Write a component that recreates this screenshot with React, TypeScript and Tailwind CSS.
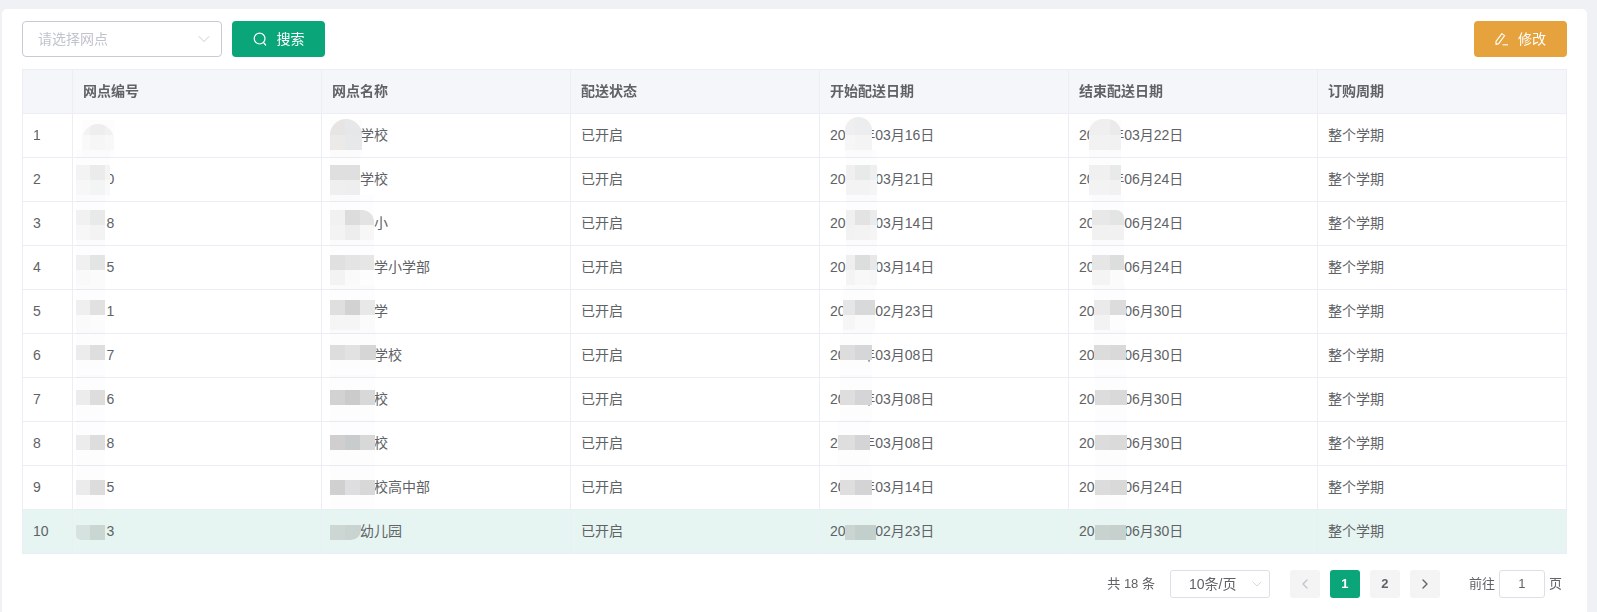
import { ChevronDown, ChevronLeft, ChevronRight } from 'lucide-react';

// w holds the width of each tile column, the mosaic grid is cut off at both ends
type Patch = { x: number; w: number[]; tiles: string[][]; lift?: number; shape?: string };

type Row = {
  id: string;
  name: [number, string];
  start: string;
  end: string;
  patches: [Patch, Patch, Patch, Patch];
};

const head = ['', '网点编号', '网点名称', '配送状态', '开始配送日期', '结束配送日期', '订购周期'];

// x of each patch is measured from the left edge of its cell
const rows: Row[] = [
  {
    id: '',
    name: [28, '学校'],
    start: '年03月16日',
    end: '年03月22日',
    patches: [
      { x: 9, w: [8, 15, 9], lift: -4, shape: 'rounded-t-[16px]', tiles: [['bg-[#f3f3f3]', 'bg-[#eeeeee]', 'bg-[#f1f1f1]'], ['bg-[#f9f9f9]', 'bg-[#f6f6f6]', 'bg-[#f8f8f8]']] },
      { x: 8, w: [15, 17], lift: 1, shape: 'rounded-t-[16px]', tiles: [['bg-[#e6e5e3]', 'bg-[#e6e7e9]'], ['bg-[#eceae8]', 'bg-[#e7e8ea]']] },
      { x: 25, w: [10, 17], lift: 3, shape: 'rounded-t-[14px]', tiles: [['bg-[#efefef]', 'bg-[#ebedee]'], ['bg-[#f6f6f6]', 'bg-[#f4f4f4]']] },
      { x: 20, w: [21, 11], lift: 1, shape: 'rounded-t-[14px]', tiles: [['bg-[#efefef]', 'bg-[#eaeaea]'], ['bg-[#f2f2f2]', 'bg-[#f1f1f1]']] },
    ],
  },
  {
    id: '0',
    name: [28, '学校'],
    start: '03月21日',
    end: '年06月24日',
    patches: [
      { x: 3, w: [14, 15, 5], tiles: [['bg-[#f3f3f3]', 'bg-[#ebebeb]', 'bg-[#f4f4f4]'], ['bg-[#f7f7f7]', 'bg-[#f3f4f4]', 'bg-[#f9f9f9]']] },
      { x: 8, w: [15, 15], tiles: [['bg-[#dfdfdf]', 'bg-[#dfdfdf]'], ['bg-[#efefef]', 'bg-[#eeeeee]']] },
      { x: 26, w: [9, 15, 7], tiles: [['bg-[#f0f0f0]', 'bg-[#e8eaea]', 'bg-[#efefef]'], ['bg-[#f3f3f3]', 'bg-[#f3f3f3]', 'bg-[#f5f5f5]']] },
      { x: 20, w: [21, 11], tiles: [['bg-[#f0f0f0]', 'bg-[#e8e9e9]'], ['bg-[#f3f3f3]', 'bg-[#f1f1f1]']] },
    ],
  },
  {
    id: '8',
    name: [42, '小'],
    start: '03月14日',
    end: '06月24日',
    patches: [
      { x: 3, w: [14, 15], tiles: [['bg-[#f1f1f1]', 'bg-[#e8e9e9]'], ['bg-[#f7f7f7]', 'bg-[#f3f3f3]']] },
      { x: 8, w: [15, 15, 14], shape: 'rounded-tr-[12px]', tiles: [['bg-[#f1f1f1]', 'bg-[#dcdcdc]', 'bg-[#e3e3e3]'], ['bg-[#f3f3f3]', 'bg-[#ededed]', 'bg-[#f7f7f7]']] },
      { x: 26, w: [9, 15, 7], tiles: [['bg-[#f0f0f0]', 'bg-[#e3e3e3]', 'bg-[#ebebeb]'], ['bg-[#f2f2f2]', 'bg-[#f3f3f3]', 'bg-[#f5f5f5]']] },
      { x: 23, w: [18, 14], shape: 'rounded-tr-[8px]', tiles: [['bg-[#e8e8e8]', 'bg-[#e3e4e4]'], ['bg-[#f1f1f1]', 'bg-[#f1f1f1]']] },
    ],
  },
  {
    id: '5',
    name: [42, '学小学部'],
    start: '03月14日',
    end: '06月24日',
    patches: [
      { x: 3, w: [14, 15], tiles: [['bg-[#f0f0f0]', 'bg-[#e3e4e4]'], ['bg-[#f9f9f9]', 'bg-[#fbfbfb]']] },
      { x: 8, w: [15, 15, 14], tiles: [['bg-[#e0e0e0]', 'bg-[#e4e4e4]', 'bg-[#e6e6e6]'], ['bg-[#f3f3f3]', 'bg-[#fafafa]', 'bg-[#fdfdfd]']] },
      { x: 26, w: [9, 15, 7], tiles: [['bg-[#efefef]', 'bg-[#dcdedd]', 'bg-[#e8e8e8]'], ['bg-[#f4f4f4]', 'bg-[#f8f8f8]', 'bg-[#f6f6f6]']] },
      { x: 23, w: [18, 14], tiles: [['bg-[#e6e6e6]', 'bg-[#dcdddd]'], ['bg-[#f4f4f4]', 'bg-[#fbfbfb]']] },
    ],
  },
  {
    id: '1',
    name: [42, '学'],
    start: '年02月23日',
    end: '06月30日',
    patches: [
      { x: 3, w: [14, 15], tiles: [['bg-[#efefef]', 'bg-[#e1e1e1]'], ['bg-[#fafafa]', 'bg-[#fcfcfc]']] },
      { x: 8, w: [15, 15, 15], tiles: [['bg-[#dfdfdf]', 'bg-[#d2d2d2]', 'bg-[#e8e8e8]'], ['bg-[#f5f5f5]', 'bg-[#f5f5f5]', 'bg-[#fbfbfb]']] },
      { x: 23, w: [12, 20], tiles: [['bg-[#e5e6e8]', 'bg-[#d8d9db]'], ['bg-[#f6f6f6]', 'bg-[#fafafa]']] },
      { x: 25, w: [16, 16], tiles: [['bg-[#eaeaea]', 'bg-[#dcdcdc]'], ['bg-[#f3f3f3]', 'bg-[#fdfdfd]']] },
    ],
  },
  {
    id: '7',
    name: [42, '学校'],
    start: '年03月08日',
    end: '06月30日',
    patches: [
      { x: 3, w: [14, 15], tiles: [['bg-[#ececec]', 'bg-[#dedede]']] },
      { x: 8, w: [15, 15, 16], tiles: [['bg-[#dddddd]', 'bg-[#e2e2e2]', 'bg-[#d6d6d6]']] },
      { x: 20, w: [15, 17], tiles: [['bg-[#dddddd]', 'bg-[#d5d6d8]']] },
      { x: 25, w: [16, 16], tiles: [['bg-[#dcdcdc]', 'bg-[#d9d9d9]']] },
    ],
  },
  {
    id: '6',
    name: [42, '校'],
    start: '年03月08日',
    end: '06月30日',
    patches: [
      { x: 3, w: [14, 15], tiles: [['bg-[#ececec]', 'bg-[#dddddd]']] },
      { x: 8, w: [15, 15, 15], tiles: [['bg-[#d2d2d2]', 'bg-[#cbcbcb]', 'bg-[#d8d8d8]']] },
      { x: 20, w: [15, 17], tiles: [['bg-[#dedede]', 'bg-[#d5d5d7]']] },
      { x: 26, w: [15, 17], tiles: [['bg-[#dcdcdc]', 'bg-[#d9d9d9]']] },
    ],
  },
  {
    id: '8',
    name: [42, '校'],
    start: '年03月08日',
    end: '06月30日',
    patches: [
      { x: 3, w: [14, 15], tiles: [['bg-[#ececec]', 'bg-[#dddddd]']] },
      { x: 8, w: [15, 15, 15], tiles: [['bg-[#d0cece]', 'bg-[#c9cccc]', 'bg-[#d8d8d8]']] },
      { x: 18, w: [17, 15], tiles: [['bg-[#dedede]', 'bg-[#d4d4d6]']] },
      { x: 26, w: [15, 17], tiles: [['bg-[#dcdcdc]', 'bg-[#dadada]']] },
    ],
  },
  {
    id: '5',
    name: [42, '校高中部'],
    start: '年03月14日',
    end: '06月24日',
    patches: [
      { x: 3, w: [14, 15], tiles: [['bg-[#ebebeb]', 'bg-[#dcdcdc]']] },
      { x: 8, w: [15, 15, 15], tiles: [['bg-[#d0d0d0]', 'bg-[#dedee0]', 'bg-[#d8d8d8]']] },
      { x: 20, w: [15, 17], tiles: [['bg-[#dedede]', 'bg-[#d4d4d6]']] },
      { x: 26, w: [15, 17], tiles: [['bg-[#dcdcdc]', 'bg-[#d9d9d9]']] },
    ],
  },
  {
    id: '3',
    name: [28, '幼儿园'],
    start: '02月23日',
    end: '06月30日',
    patches: [
      { x: 3, w: [14, 15], shape: 'rounded-bl-[5px]', tiles: [['bg-[#d6e2df]', 'bg-[#c9d6d2]']] },
      { x: 8, w: [15, 16], shape: 'rounded-br-[10px]', tiles: [['bg-[#ccd6d3]', 'bg-[#c9d4d0]']] },
      { x: 25, w: [10, 21], tiles: [['bg-[#cad5d2]', 'bg-[#c3cfcb]']] },
      { x: 26, w: [15, 16], tiles: [['bg-[#c8d3cf]', 'bg-[#c6d1cd]']] },
    ],
  },
];

// pixelated patch that hides part of a cell, with its faint halo
function Mosaic({ patch, rowIndex }: { patch: Patch; rowIndex: number }) {
  const width = patch.w.reduce((a, b) => a + b, 0);
  const lift = patch.lift ?? 0;
  const top = 6 + rowIndex - lift;
  return (
    <>
      {rowIndex < 9 && (
        <div
          className="absolute bg-[#fdfdfd] mix-blend-multiply"
          style={{ left: patch.x, top: top + lift + (rowIndex === 0 ? 0 : -15), width, height: rowIndex === 0 ? 45 : 60 }}
        />
      )}
      <div className={`absolute overflow-hidden ${patch.shape ?? ''}`} style={{ left: patch.x, top }}>
        {patch.tiles.map((line, i) => (
          <div key={i} className="flex">
            {line.map((tile, j) => (
              <div key={j} className={tile} style={{ width: patch.w[j], height: i === 0 ? 15 + lift : 15 }} />
            ))}
          </div>
        ))}
      </div>
    </>
  );
}

// the year is hidden in the picture, only "20" and sometimes 年 stay readable
function DateText({ text }: { text: string }) {
  const gap = text.startsWith('年') ? 15.6 : 29.6;
  return (
    <>
      20
      <span className="inline-block" style={{ width: gap }} />
      {text}
    </>
  );
}

function SearchIcon() {
  return (
    <svg width="14" height="14" viewBox="0 0 14 14" fill="none" stroke="white" strokeWidth="1.2">
      <circle cx="6.6" cy="6.6" r="5.4" />
      <path d="M10.6 10.6 L12.6 13" strokeLinecap="round" />
    </svg>
  );
}

function EditIcon() {
  return (
    <svg width="14" height="14" viewBox="0 0 14 14" fill="none" stroke="white" strokeWidth="1.1">
      <path d="M1 9.4 L6.9 1.6 L9.6 3.6 L3.7 11.6 L1 12.4 Z" strokeLinejoin="round" />
      <path d="M7.5 12.8 H13" />
    </svg>
  );
}

const pageBtn = 'flex h-7 w-[30px] items-center justify-center rounded-[3px] text-[13px] font-bold';

export default function App() {
  return (
    <div className="h-[612px] overflow-hidden bg-[#f0f1f4] pl-[2px] pr-[10px] pt-[9px] font-['Liberation_Sans','Noto_Sans_CJK_SC',sans-serif] text-[14px] text-[#606266]">
      <div className="h-[603px] rounded-t-[5px] bg-white px-5 pt-3">
        <div className="mb-3 flex h-9 items-center">
          <div className="flex h-9 w-[200px] items-center justify-between rounded-[4px] border border-[#c8cad4] pl-[15px] pr-[7px] text-[#c0c4cc]">
            <span>请选择网点</span>
            <ChevronDown size={20} strokeWidth={1} />
          </div>
          <button className="ml-[10px] flex h-9 w-[93px] items-center justify-center gap-[10px] rounded-[4px] bg-[#0aa679] text-white">
            <SearchIcon />
            搜索
          </button>
          <button className="ml-auto flex h-9 w-[93px] items-center justify-center gap-[9px] rounded-[4px] bg-[#e6a23c] text-white">
            <EditIcon />
            修改
          </button>
        </div>

        <div className="w-[1545px] border-l border-t border-[#ebeef5]">
          <table className="w-[1544px] table-fixed border-separate border-spacing-0">
            <colgroup>
              <col className="w-[50px]" />
              <col className="w-[249px]" />
              <col className="w-[249px]" />
              <col className="w-[249px]" />
              <col className="w-[249px]" />
              <col className="w-[249px]" />
              <col className="w-[249px]" />
            </colgroup>
            <thead>
              <tr>
                {head.map((title, i) => (
                  <th key={i} className="h-[44px] border-b border-r border-[#ebeef5] bg-[#f5f6f9] px-[10px] text-left font-bold">
                    {title}
                  </th>
                ))}
              </tr>
            </thead>
            <tbody>
              {rows.map((row, r) => {
                const cell = `relative h-[44px] border-b border-r border-[#ebeef5] px-[10px] ${r === 9 ? 'bg-[#e6f5f1]' : 'bg-white'}`;
                return (
                  <tr key={r}>
                    <td className={cell}>{r + 1}</td>
                    <td className={cell}>
                      <span className="inline-block w-[23.4px]" />
                      {row.id}
                      <Mosaic patch={row.patches[0]} rowIndex={r} />
                    </td>
                    <td className={cell}>
                      <span className="inline-block" style={{ width: row.name[0] }} />
                      {row.name[1]}
                      <Mosaic patch={row.patches[1]} rowIndex={r} />
                    </td>
                    <td className={cell}>已开启</td>
                    <td className={cell}>
                      <DateText text={row.start} />
                      <Mosaic patch={row.patches[2]} rowIndex={r} />
                    </td>
                    <td className={cell}>
                      <DateText text={row.end} />
                      <Mosaic patch={row.patches[3]} rowIndex={r} />
                    </td>
                    <td className={cell}>整个学期</td>
                  </tr>
                );
              })}
            </tbody>
          </table>
        </div>

        <div className="mt-4 flex h-7 items-center justify-end pr-[5px] text-[13px]">
          <span>共 18 条</span>
          <div className="ml-[15px] flex h-7 w-[100px] items-center justify-between rounded-[3px] border border-[#dcdfe6] pl-[18px] pr-[4px] text-[14px]">
            <span>10条/页</span>
            <ChevronDown size={16} strokeWidth={1} className="text-[#c0c4cc]" />
          </div>
          <div className={`ml-5 bg-[#f4f4f5] text-[#c0c4cc] ${pageBtn}`}>
            <ChevronLeft size={16} />
          </div>
          <div className={`ml-[10px] bg-[#0aa679] text-white ${pageBtn}`}>1</div>
          <div className={`ml-[10px] bg-[#f4f4f5] ${pageBtn}`}>2</div>
          <div className={`ml-[10px] bg-[#f4f4f5] ${pageBtn}`}>
            <ChevronRight size={16} />
          </div>
          <span className="ml-[29px]">前往</span>
          <div className="mx-[4px] flex h-7 w-[46px] items-center justify-center rounded-[3px] border border-[#dcdfe6]">1</div>
          <span>页</span>
        </div>
      </div>
    </div>
  );
}
